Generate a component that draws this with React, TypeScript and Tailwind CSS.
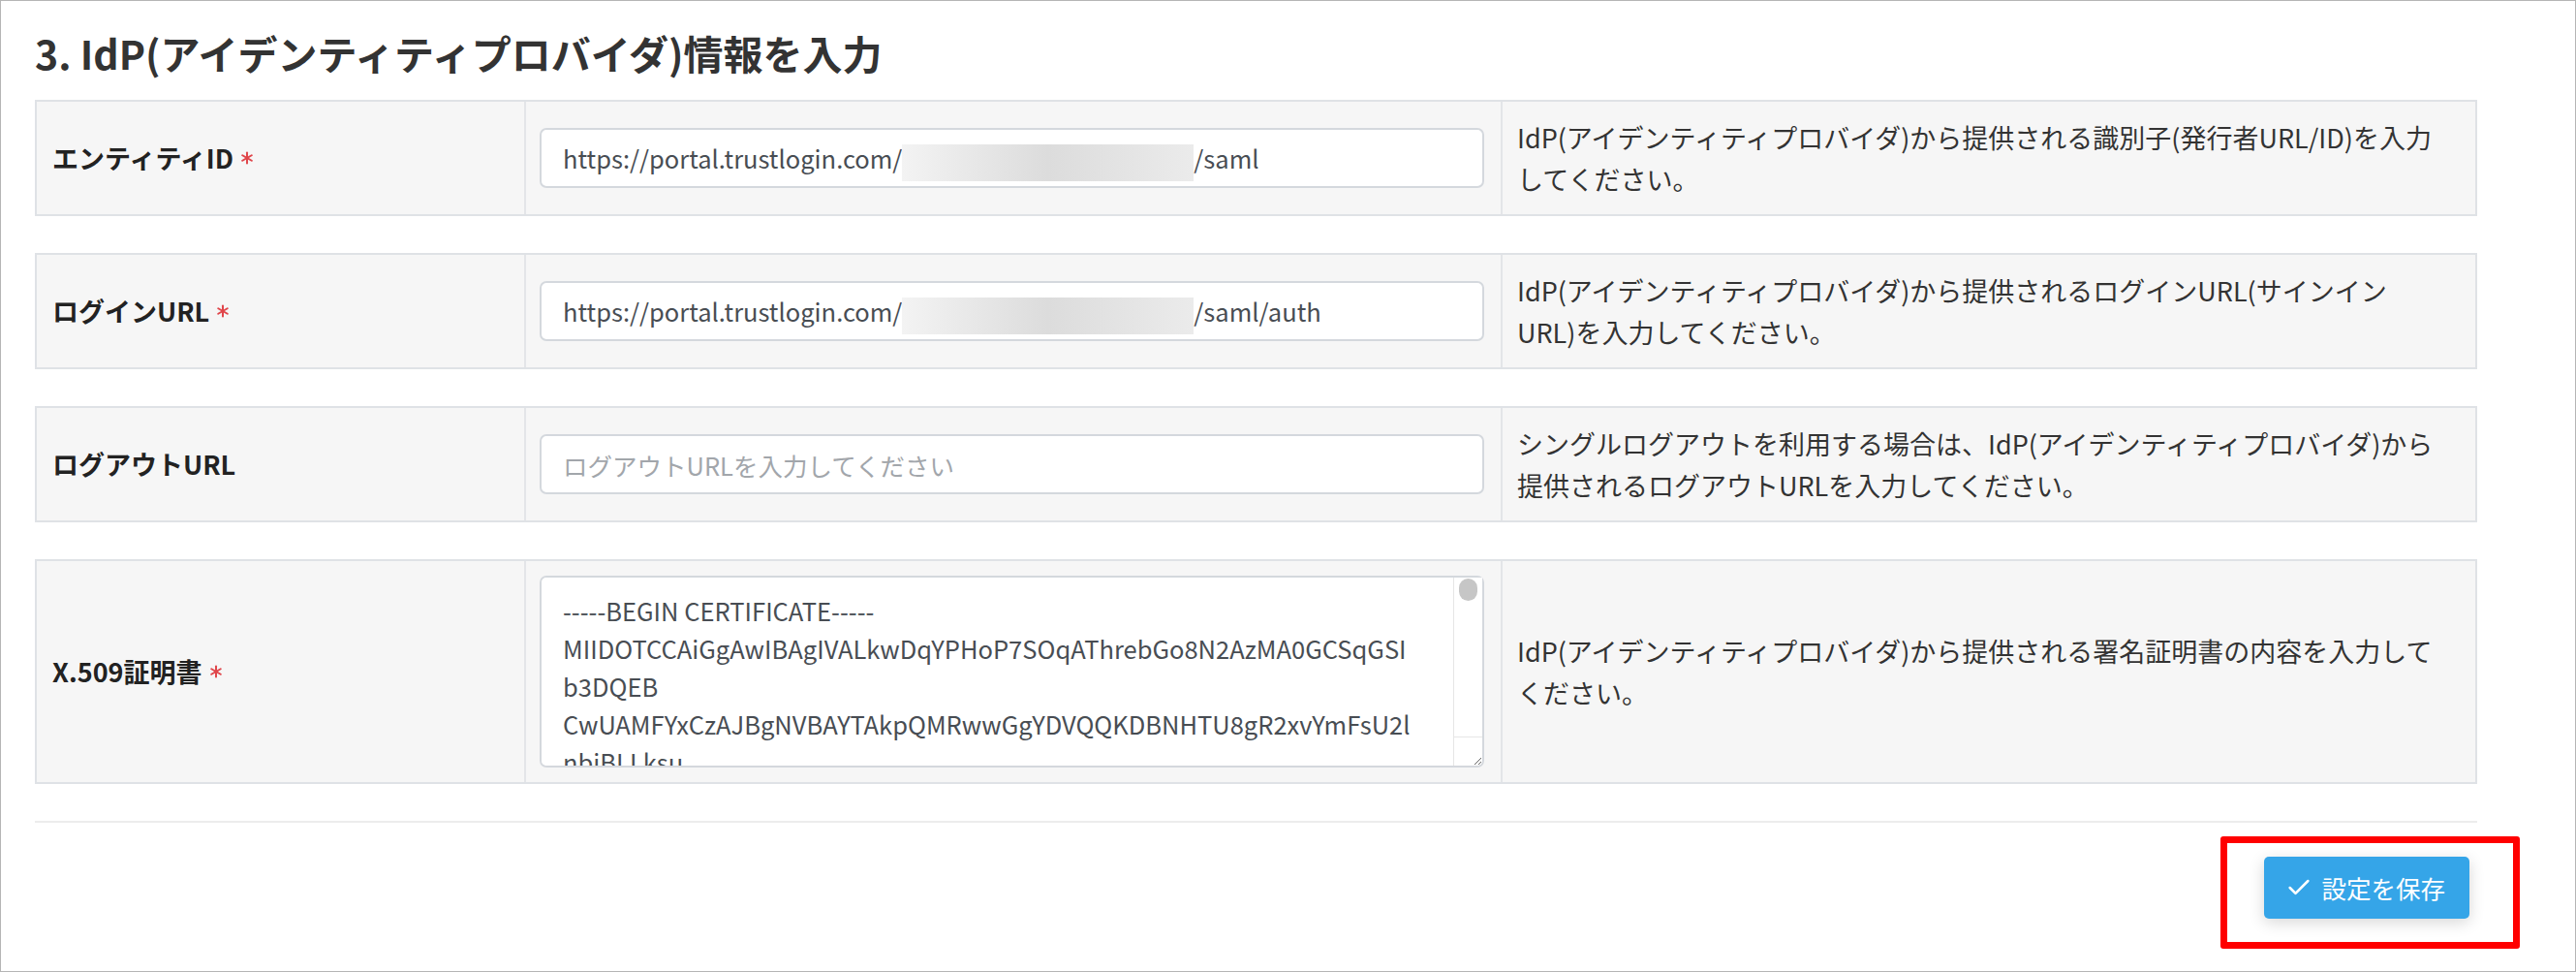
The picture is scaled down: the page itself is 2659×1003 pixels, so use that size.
import { Check, Asterisk } from "lucide-react";

type Field = {
  label: string;
  required: boolean;
  kind: "masked" | "input" | "cert";
  prefix?: string;
  suffix?: string;
  placeholder?: string;
  desc: string[];
};

// 証明書の先頭はテキストエリアの表示幅で折り返した形で持っておく
const certificate = [
  "-----BEGIN CERTIFICATE-----",
  "MIIDOTCCAiGgAwIBAgIVALkwDqYPHoP7SOqAThrebGo8N2AzMA0GCSqGSI",
  "b3DQEB",
  "CwUAMFYxCzAJBgNVBAYTAkpQMRwwGgYDVQQKDBNHTU8gR2xvYmFsU2l",
  "nbiBLLksu",
  "MSkwJwYDVQQDDCBUUlVTVExPR0lOIFNBTUwgU2lnbmluZyBDZXJ0aWZp",
  "Y2F0ZTAeFw0yMzA0MTAwMDAwMDBaFw0zMzA0MTAwMDAwMDBaMFYxCzAJ",
  "BgNVBAYTAkpQMRwwGgYDVQQKDBNHTU8gR2xvYmFsU2lnbiBLLksuMSkw",
  "DCBUUlVTVExPR0lOIFNBTUwgU2lnbmluZyBDZXJ0aWZpY2F0ZTCCASIw",
  "hvcNAQEBBQADggEPADCCAQoCggEBAL3x9kQmZ2pTn4rW8yHcE1uVb0aJ",
  "qLw5tXe2RzYo3iMhFv8cPj1nUk4DgS9bAa0lOyWrTq7mZx6VdC2sEhGf",
  "Jn8wQy3LtRz1XcVa6mS0kPd4bHfUg9oEiT2rN7xYlM5sCqWjZ3vDa8pK",
  "t0yB4nLwXo9cQmS2eVa7iTzPd1kRhU5jYbN3fE8gCqMx6sWvOl0aKr2t",
  "uEc7bNo1QfLs5mXk3wVg8iRaT6zYp2hDe0jUqC9nFb4tMlWx7vKs1oGy",
  "Zi8uTqL2wNc6kXb0mRf4sEy9aVh1jPo7gDt3nKl5xWq2eCz8iUb6rMa0",
  "AgMBAAGjEDAOMAwGA1UdEwEB/wQCMAAwDQYJKoZIhvcNAQELBQADggEB",
  "Kd2xWm5tPz0sLb7eYc9aFh4uNg1iQj6oTr3lVk8yEp2wZs5mCx0nDa7b",
  "Rh9vKo3jXz6cLm2sWy8pNd0aTe5iBq7uFg4rMk1lYx9oVc3hEs6tZa2w",
  "Gu5iLq7mSy3eXr1aWk9tNo4pDb6cVz2hFj8uMx0lRe5gQs7yKa3iBw1n",
  "Lm4eZr2uHk8aXs0tJy6pWq1cNb9iDf3lVg7oMe5hSz4xKa2rTu8wBn0j",
  "Qe7kFs3mUz9aRx5tLo1iCw8pHb2nVy4eGd6jKa0uMs3lXr9oTq7cWe1h",
  "/wIDAQAB",
  "-----END CERTIFICATE-----",
].join("\n");

const fields: Field[] = [
  {
    label: "エンティティID",
    required: true,
    kind: "masked",
    prefix: "https://portal.trustlogin.com/",
    suffix: "/saml",
    desc: [
      "IdP(アイデンティティプロバイダ)から提供される識別子(発行者URL/ID)を入力",
      "してください。",
    ],
  },
  {
    label: "ログインURL",
    required: true,
    kind: "masked",
    prefix: "https://portal.trustlogin.com/",
    suffix: "/saml/auth",
    desc: [
      "IdP(アイデンティティプロバイダ)から提供されるログインURL(サインイン",
      "URL)を入力してください。",
    ],
  },
  {
    label: "ログアウトURL",
    required: false,
    kind: "input",
    placeholder: "ログアウトURLを入力してください",
    desc: [
      "シングルログアウトを利用する場合は、IdP(アイデンティティプロバイダ)から",
      "提供されるログアウトURLを入力してください。",
    ],
  },
  {
    label: "X.509証明書",
    required: true,
    kind: "cert",
    desc: [
      "IdP(アイデンティティプロバイダ)から提供される署名証明書の内容を入力して",
      "ください。",
    ],
  },
];

function MaskedField({ prefix, suffix }: { prefix: string; suffix: string }) {
  return (
    <div className="flex items-center h-[62px] w-full bg-white border-2 border-[#d4d8dd] rounded-[7px] px-[22px] text-[25.5px] text-[#484d53] whitespace-nowrap">
      <span>{prefix}</span>
      {/* テナント部分はぼかして表示 */}
      <span className="mt-[10px] h-[38px] w-[301px] shrink-0 bg-gradient-to-r from-[#f3f3f3] via-[#dcdcdc] to-[#ebebeb]" />
      <span>{suffix}</span>
    </div>
  );
}

function FieldControl({ field }: { field: Field }) {
  if (field.kind === "masked") {
    return <MaskedField prefix={field.prefix!} suffix={field.suffix!} />;
  }
  if (field.kind === "input") {
    return (
      <input
        type="text"
        placeholder={field.placeholder}
        className="h-[62px] w-full bg-white border-2 border-[#d4d8dd] rounded-[7px] px-[22px] text-[25.5px] text-[#484d53] placeholder:text-[#a2a6ab] outline-none"
      />
    );
  }
  return (
    <div className="relative w-full">
      <textarea
        defaultValue={certificate}
        className="block h-[198px] w-full bg-white border-2 border-[#d4d8dd] rounded-[7px] pl-[22px] pr-[34px] pt-[14px] text-[25.5px] leading-[39px] text-[#484d53] outline-none"
      />
      {/* スクロールバー（トラックとつまみ） */}
      <div className="absolute right-[2px] top-[2px] bottom-[32px] w-[30px] border-l border-[#e6e6e6] bg-white pointer-events-none">
        <div className="mx-auto mt-[1px] h-[23px] w-[19px] rounded-full bg-[#c6c6c6]" />
      </div>
      <div className="absolute right-[2px] bottom-[2px] h-[30px] w-[30px] border-l border-t border-[#e6e6e6] pointer-events-none" />
    </div>
  );
}

function FieldRow({ field }: { field: Field }) {
  return (
    <div className="grid grid-cols-[503px_1008px_1006px] border-2 border-[#dfe2e6] bg-[#f6f6f6]">
      <div className="flex items-center pl-4 text-[27px] font-bold text-[#222]">
        <span>{field.label}</span>
        {field.required && (
          <Asterisk size={22} strokeWidth={2.2} className="ml-[3px] text-[#e0464b]" />
        )}
      </div>
      <div className="flex items-center border-l-2 border-[#e3e5e8] pl-[14px] pr-[17px] py-[15px]">
        <FieldControl field={field} />
      </div>
      <div className="flex items-center border-l-2 border-[#e3e5e8] pl-[15px] pr-[6px] py-[15px] text-[27px] leading-[43px] text-[#333] whitespace-nowrap">
        <p>
          {field.desc[0]}
          <br />
          {field.desc[1]}
        </p>
      </div>
    </div>
  );
}

export default function App() {
  return (
    <div className="w-[2659px] h-[1003px] bg-white border border-[#b5b5b5] font-['Noto_Sans_CJK_JP','Noto_Sans',sans-serif]">
      <div className="pl-[35px] pr-[101px] pt-[29px]">
        <h2 className="text-[41px] leading-[49px] font-bold text-[#333] mb-[24px]">
          3. IdP(アイデンティティプロバイダ)情報を入力
        </h2>

        <div className="flex flex-col gap-[38px]">
          {fields.map((f) => (
            <FieldRow key={f.label} field={f} />
          ))}
        </div>

        <div className="mt-[38px] h-[2px] bg-[#ececec]" />

        <div className="flex justify-end pr-[8px] mt-[35px]">
          <div className="relative">
            <button className="flex items-center gap-[9px] h-[64px] pl-[22px] pr-[25px] bg-[#35a5e8] text-white text-[25.5px] rounded-[5px] shadow-[0_4px_16px_rgba(0,0,0,0.16)]">
              <Check size={28} strokeWidth={2.2} />
              設定を保存
            </button>
            {/* 保存ボタンの強調枠 */}
            <div className="absolute -left-[45px] -top-[21px] w-[309px] h-[116px] border-[7px] border-[#ff0000] rounded-[3px] pointer-events-none" />
          </div>
        </div>
      </div>
    </div>
  );
}
